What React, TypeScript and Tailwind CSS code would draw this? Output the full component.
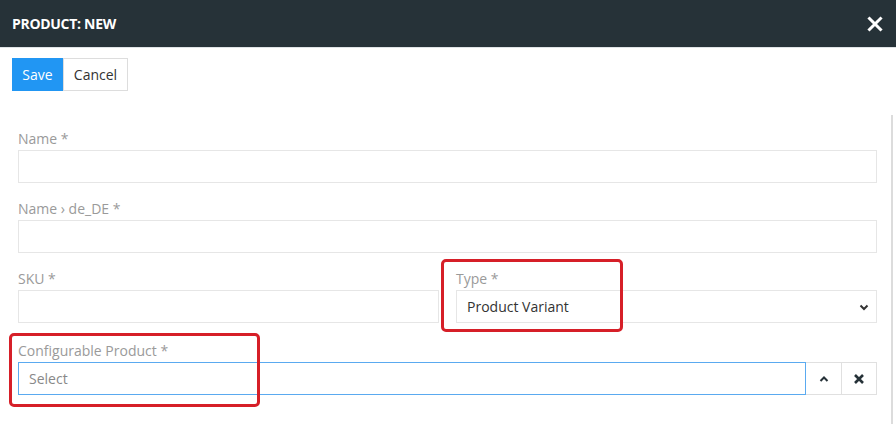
import React from "react";

const Label = ({ children }: { children: React.ReactNode }) => (
  <div className="mb-[1px] text-[14px] leading-[20px] text-[#9a9a9a]">{children}</div>
);

const Input = () => <div className="h-[33px] border border-[#e6e6e6] bg-white" />;

const App: React.FC = () => {
  return (
    <div
      className="relative h-[424px] w-[896px] overflow-hidden bg-white"
      style={{ fontFamily: '"Open Sans", sans-serif' }}
    >
      {/* Header */}
      <div className="flex h-[48px] items-center justify-between border-b border-[#dfe3e6] bg-[#263238] pl-[12px] pr-[13px]">
        <span className="text-[14px] font-bold tracking-[-0.3px] text-white">PRODUCT: NEW</span>
        <svg width="16" height="16" viewBox="0 0 16 16" className="mt-[1px]">
          <path d="M2.5 2.5 L13.5 13.5 M13.5 2.5 L2.5 13.5" stroke="white" strokeWidth="3" strokeLinecap="square" />
        </svg>
      </div>

      {/* Toolbar */}
      <div className="flex pl-[12px] pt-[10px]">
        <button className="h-[33px] w-[51px] bg-[#2196f3] text-[14px] text-white">Save</button>
        <button className="h-[33px] w-[65px] border border-[#dddddd] bg-white text-[14px] text-[#333]">
          Cancel
        </button>
      </div>

      {/* Form */}
      <div className="flex flex-col gap-[16px] pl-[18px] pr-[19px] pt-[38px]">
        <div>
          <Label>Name *</Label>
          <Input />
        </div>
        <div>
          <Label>Name › de_DE *</Label>
          <Input />
        </div>
        <div className="grid grid-cols-2 gap-[17px]">
          <div>
            <Label>SKU *</Label>
            <Input />
          </div>
          <div>
            <Label>Type *</Label>
            <div className="flex h-[33px] items-center justify-between border border-[#e6e6e6] pl-[10px] pr-[7px] text-[14px] text-[#333]">
              <span>Product Variant</span>
              <svg width="10" height="10" viewBox="0 0 10 10">
                <path d="M1.5 3.5 L5 7 L8.5 3.5" fill="none" stroke="#333" strokeWidth="2" />
              </svg>
            </div>
          </div>
        </div>
        <div className="mt-[2px]">
          <Label>Configurable Product *</Label>
          <div className="flex h-[33px]">
            <div className="flex flex-1 items-center border border-[#5aaaf0] pl-[10px] text-[14px] text-[#888]">
              Select
            </div>
            <div className="flex w-[35px] items-center justify-center border-y border-[#e0e0e0]">
              <svg width="10" height="10" viewBox="0 0 10 10">
                <path d="M1.5 7 L5 3.5 L8.5 7" fill="none" stroke="#263238" strokeWidth="2" />
              </svg>
            </div>
            <div className="flex w-[36px] items-center justify-center border border-[#e0e0e0]">
              <svg width="12" height="12" viewBox="0 0 12 12">
                <path d="M2 2 L10 10 M10 2 L2 10" stroke="#263238" strokeWidth="2.6" />
              </svg>
            </div>
          </div>
        </div>
      </div>

      {/* scroll edge */}
      <div className="absolute bottom-0 left-[891px] top-[115px] w-[2px] bg-[#dcdcdc]" />

      {/* highlight boxes */}
      <div className="absolute left-[441px] top-[259px] h-[73px] w-[182px] rounded-[5px] border-[3px] border-[#d61f28]" />
      <div className="absolute left-[9px] top-[333px] h-[74px] w-[251px] rounded-[5px] border-[3px] border-[#d61f28]" />
    </div>
  );
};

export default App;
